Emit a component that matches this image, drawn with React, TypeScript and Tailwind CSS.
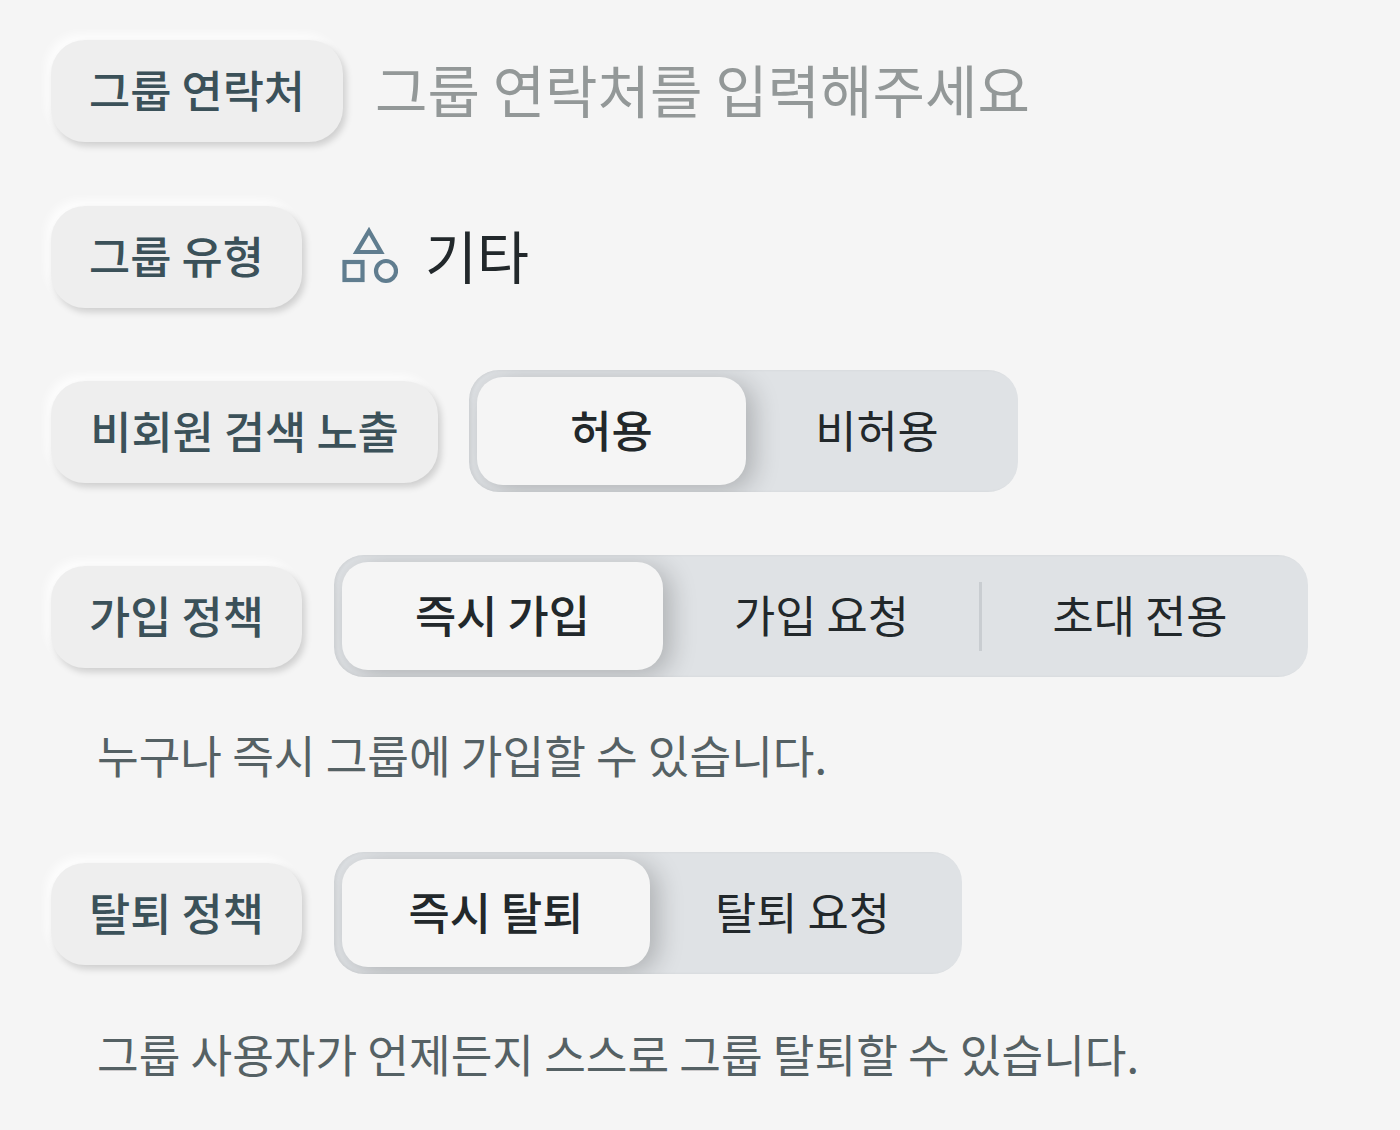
const font = "font-['Noto_Sans_CJK_KR','Noto_Sans',sans-serif]";

function Label({ text, width, className = "" }: { text: string; width: string; className?: string }) {
  return (
    <div className={`${width} ${className} h-[102px] shrink-0 flex items-center justify-center rounded-[34px] bg-[#eeeeee] pb-1 text-[44.8px] font-medium leading-none text-[#3b5159] shadow-[3px_4px_7px_rgba(0,0,0,0.16),-5px_-6px_10px_rgba(255,255,255,0.8)]`}>
      {text}
    </div>
  );
}

function Segment({ options, widths, width, className }: { options: string[]; widths: string[]; width: string; className: string }) {
  return (
    <div className={`${width} ${className} h-[122px] flex overflow-hidden rounded-[30px] bg-[#dfe2e5] pl-2 pt-[7px] pb-[7px] shadow-[inset_2px_0_3px_rgba(0,0,0,0.06)]`}>
      {options.map((o, i) => (
        <div key={o} className={`${widths[i]} relative flex h-full items-center justify-center pb-[3px] text-[44.8px] leading-none text-[#22282b] ${i === 0 ? "z-10 rounded-[26px] bg-[#f5f5f5] font-medium shadow-[8px_5px_26px_rgba(0,0,0,0.22)]" : ""}`}>
          {o}
          {i === 1 && options.length === 3 && <span className="absolute right-[-2px] top-5 h-[69px] w-[3px] bg-[#c9cdd1]" />}
        </div>
      ))}
    </div>
  );
}

export default function App() {
  return (
    <div className={`${font} h-[1130px] w-[1400px] overflow-hidden bg-[#f5f5f5] pl-[51px] pt-10`}>
      <div className="flex items-center">
        <Label text="그룹 연락처" width="w-[292px]" />
        <span className="mb-[5px] ml-8 text-[57px] leading-none text-[#939898]">그룹 연락처를 입력해주세요</span>
      </div>

      <div className="mt-[64px] flex items-center">
        <Label text="그룹 유형" width="w-[251px]" />
        <svg className="mb-[5px] ml-10 shrink-0" width="56" height="58" viewBox="0 0 56 58" fill="none" stroke="#607d8f" strokeWidth="4.2">
          <path d="M27 5 L39 26 L14.5 26 Z" />
          <rect x="2.5" y="36" width="18" height="18" />
          <circle cx="44" cy="45" r="10" />
        </svg>
        <span className="mb-[5px] ml-[27px] text-[56.5px] leading-none text-[#22282b]">기타</span>
      </div>

      <div className="mt-[62px] flex items-center">
        <Label text="비회원 검색 노출" width="w-[387px]" className="mt-0.5" />
        <Segment className="ml-[31px]" width="w-[549px]" options={["허용", "비허용"]} widths={["w-[269px]", "w-[262px]"]} />
      </div>

      <div className="mt-[63px] flex items-center">
        <Label text="가입 정책" width="w-[251px]" className="mt-0.5" />
        <Segment className="ml-8" width="w-[974px]" options={["즉시 가입", "가입 요청", "초대 전용"]} widths={["w-[321px]", "w-[317px]", "w-[320px]"]} />
      </div>
      <p className="ml-[46px] mt-[55px] text-[45.3px] leading-none text-[#556164]">누구나 즉시 그룹에 가입할 수 있습니다.</p>

      <div className="mt-[75px] flex items-center">
        <Label text="탈퇴 정책" width="w-[251px]" className="mt-0.5" />
        <Segment className="ml-8" width="w-[628px]" options={["즉시 탈퇴", "탈퇴 요청"]} widths={["w-[308px]", "w-[305px]"]} />
      </div>
      <p className="ml-[46px] mt-[57px] text-[45.3px] leading-none text-[#556164]">그룹 사용자가 언제든지 스스로 그룹 탈퇴할 수 있습니다.</p>
    </div>
  );
}
